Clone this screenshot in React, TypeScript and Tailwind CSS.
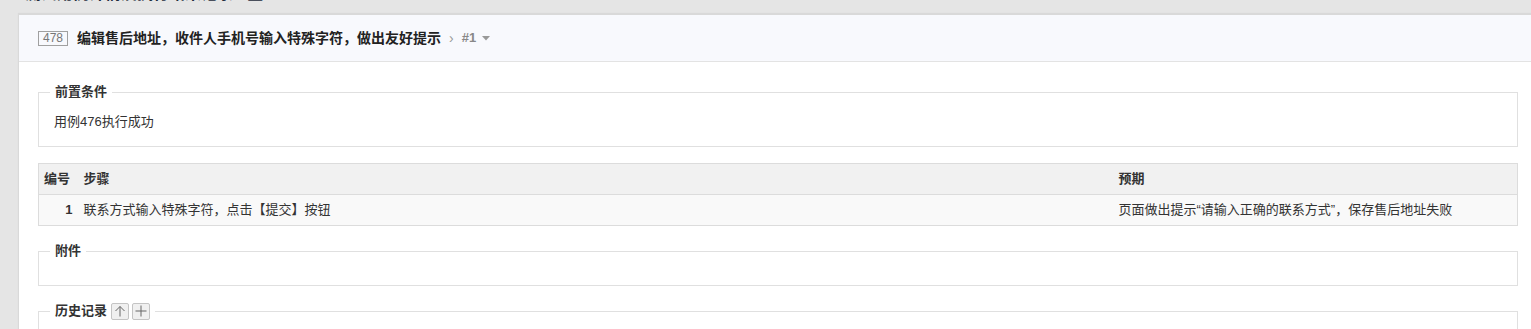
import React from 'react';

const font = { fontFamily: '"Liberation Sans", "Noto Sans CJK SC", sans-serif' };

function Section({ title, extra, children, bodyClass }: { title: string; extra?: React.ReactNode; children?: React.ReactNode; bodyClass?: string }) {
  return (
    <fieldset className="border border-[#e0e0e0] px-[15px]">
      <legend className="ml-[-4px] px-[5px] flex items-center h-[20px] text-[13px] font-bold text-[#333]">
        <span>{title}</span>
        {extra}
      </legend>
      <div className={bodyClass}>{children}</div>
    </fieldset>
  );
}

function IconButton({ children }: { children: React.ReactNode }) {
  return (
    <span className="ml-[3px] first:ml-[2px] w-[18px] h-[17px] flex items-center justify-center border border-[#c4c4c4] bg-[#f0f0f0] rounded-[2px]">
      {children}
    </span>
  );
}

export default function App() {
  return (
    <div className="w-[1531px] h-[329px] overflow-hidden bg-[#e5e5e5]" style={font}>
      {/* page title, scrolled mostly out of view */}
      <div className="h-[14px] overflow-hidden pl-[25px]">
        <div className="-mt-[16px] text-[16px] leading-[20px] font-bold text-[#1f2d3d]">测试用例详情及执行结果记录 · 查</div>
      </div>

      <div className="ml-[18px] w-[1530px] bg-white border-l border-t border-[#d9d9d9] shadow-[0_-1px_1px_rgba(0,0,0,0.05)]">
        {/* Header */}
        <div className="h-[47px] border-b border-[#e3e3e3] bg-[#f8f9fd] flex items-center pl-[19px]">
          <span className="h-[15px] px-[4px] flex items-center border border-[#a0a0a0] text-[12px] text-[#777] leading-none">478</span>
          <span className="ml-[9px] text-[14px] font-bold text-[#222]">编辑售后地址，收件人手机号输入特殊字符，做出友好提示</span>
          <span className="ml-[8px] text-[14px] text-[#999]">›</span>
          <span className="ml-[8px] text-[13px] font-bold text-[#888]">#1</span>
          <svg className="ml-[6px]" width="8" height="5" viewBox="0 0 8 5">
            <path d="M0 0h8L4 4.5z" fill="#999" />
          </svg>
        </div>

        {/* Body */}
        <div className="pt-[20px] pl-[19px] w-[1499px] text-[13px] text-[#333]">
          <Section title="前置条件" bodyClass="pt-[10px] pb-[14px] leading-[20px]">
            用例476执行成功
          </Section>

          <table className="mt-[16px] w-full border-collapse border border-[#dcdcdc]">
            <thead>
              <tr className="bg-[#f1f1f1] h-[31px] text-left font-bold">
                <th className="w-[40px] pl-[5px]">编号</th>
                <th className="pl-[5px]">步骤</th>
                <th className="w-[404px] pl-[5px]">预期</th>
              </tr>
            </thead>
            <tbody>
              <tr className="bg-[#f9f9f9] h-[31px] border-t border-[#dcdcdc]">
                <td className="text-right pr-[6px] font-bold">1</td>
                <td className="pl-[5px]">联系方式输入特殊字符，点击【提交】按钮</td>
                <td className="pl-[5px]">页面做出提示“请输入正确的联系方式”，保存售后地址失败</td>
              </tr>
            </tbody>
          </table>

          <div className="mt-[15px]">
            <Section title="附件" bodyClass="h-[24px]" />
          </div>

          <div className="mt-[15px]">
            <Section
              title="历史记录"
              bodyClass="h-[30px]"
              extra={
                <span className="flex items-center ml-[2px]">
                  <IconButton>
                    <svg width="12" height="12" viewBox="0 0 12 12" fill="none" stroke="#666" strokeWidth="1">
                      <path d="M6 1.5V11.5M1.5 6L6 1.5L10.5 6" />
                    </svg>
                  </IconButton>
                  <IconButton>
                    <svg width="12" height="12" viewBox="0 0 12 12" fill="none" stroke="#666" strokeWidth="1">
                      <path d="M6 0.5V11.5M0.5 6H11.5" />
                    </svg>
                  </IconButton>
                </span>
              }
            />
          </div>
        </div>
      </div>
    </div>
  );
}
